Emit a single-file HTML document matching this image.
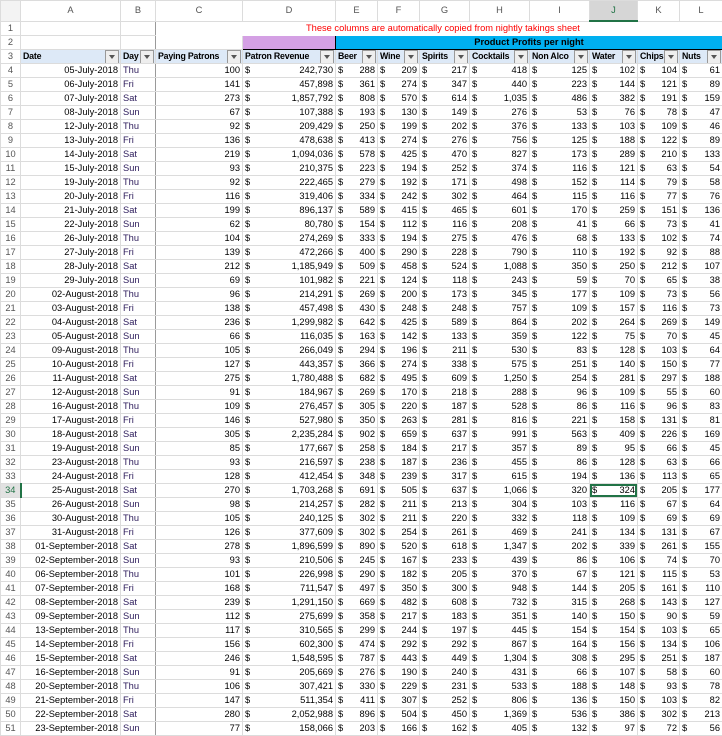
<!DOCTYPE html><html><head><style>
body{margin:0;width:722px;height:736px;overflow:hidden;background:#fff;font-family:"Liberation Sans",sans-serif;font-size:9.3px;color:#000}
table{border-collapse:collapse;table-layout:fixed;width:722px}
td,th{border:1px solid #dcdcdc;padding:0 2px;height:13px;line-height:13px;white-space:nowrap;overflow:hidden}
th{font-weight:normal;color:#555;background:#fff;text-align:center}
thead th{height:19px;line-height:19px}
tbody th{text-align:center}
td{text-align:right}
td.d{text-align:left;color:#2b1a5a;border-right:1px solid #9a9a9a}
td.m{text-align:left}
td.m i{float:right;font-style:normal}
tr.h td{background:#dde9f7;font-weight:bold;text-align:left;position:relative;font-size:8.8px;letter-spacing:-0.2px}
tr.h td span{position:absolute;right:1px;top:0px;width:12px;height:12px;border:1px solid #999;background:#eee;z-index:2}
tr.h td span:after{content:"";position:absolute;left:3px;top:4px;border-left:3px solid transparent;border-right:3px solid transparent;border-top:4px solid #555}
.sel{box-shadow:inset 0 0 0 2px #217346;position:relative}
</style></head><body>
<table>
<colgroup><col style="width:20px"><col style="width:100px"><col style="width:35px"><col style="width:87px"><col style="width:93px"><col style="width:42px"><col style="width:42px"><col style="width:50px"><col style="width:60px"><col style="width:60px"><col style="width:48px"><col style="width:42px"><col style="width:43px"></colgroup>
<thead><tr><th style="background:#f3f3f3"></th><th>A</th><th>B</th><th>C</th><th>D</th><th>E</th><th>F</th><th>G</th><th>H</th><th>I</th><th style="background:#d6d6d6;color:#217346;border-bottom:2px solid #217346">J</th><th>K</th><th>L</th></tr></thead>
<tbody>
<tr><th>1</th><td></td><td class=d></td><td colspan=10 style="text-align:left;color:#f00;padding-left:150px;border-color:#fff">These columns are automatically copied from nightly takings sheet</td></tr>
<tr><th>2</th><td></td><td class=d></td><td></td><td style="background:#d4a0e4;border:1px solid #000"></td><td colspan=8 style="background:#00b0f0;border:1px solid #000;text-align:center;font-weight:bold">Product Profits per night</td></tr>
<tr class=h><th style="background:#fff;font-weight:normal">3</th><td>Date<span></span></td><td>Day<span></span></td><td>Paying Patrons<span></span></td><td>Patron Revenue<span></span></td><td>Beer<span></span></td><td>Wine<span></span></td><td>Spirits<span></span></td><td>Cocktails<span></span></td><td>Non Alco<span></span></td><td>Water<span></span></td><td>Chips<span></span></td><td>Nuts<span></span></td></tr>
<tr><th>4</th><td>05-July-2018</td><td class=d>Thu</td><td>100</td><td class=m>$<i>242,730</i></td><td class=m>$<i>288</i></td><td class=m>$<i>209</i></td><td class=m>$<i>217</i></td><td class=m>$<i>418</i></td><td class=m>$<i>125</i></td><td class=m>$<i>102</i></td><td class=m>$<i>104</i></td><td class=m>$<i>61</i></td></tr>
<tr><th>5</th><td>06-July-2018</td><td class=d>Fri</td><td>141</td><td class=m>$<i>457,898</i></td><td class=m>$<i>361</i></td><td class=m>$<i>274</i></td><td class=m>$<i>347</i></td><td class=m>$<i>440</i></td><td class=m>$<i>223</i></td><td class=m>$<i>144</i></td><td class=m>$<i>121</i></td><td class=m>$<i>89</i></td></tr>
<tr><th>6</th><td>07-July-2018</td><td class=d>Sat</td><td>273</td><td class=m>$<i>1,857,792</i></td><td class=m>$<i>808</i></td><td class=m>$<i>570</i></td><td class=m>$<i>614</i></td><td class=m>$<i>1,035</i></td><td class=m>$<i>486</i></td><td class=m>$<i>382</i></td><td class=m>$<i>191</i></td><td class=m>$<i>159</i></td></tr>
<tr><th>7</th><td>08-July-2018</td><td class=d>Sun</td><td>67</td><td class=m>$<i>107,388</i></td><td class=m>$<i>193</i></td><td class=m>$<i>130</i></td><td class=m>$<i>149</i></td><td class=m>$<i>276</i></td><td class=m>$<i>53</i></td><td class=m>$<i>76</i></td><td class=m>$<i>78</i></td><td class=m>$<i>47</i></td></tr>
<tr><th>8</th><td>12-July-2018</td><td class=d>Thu</td><td>92</td><td class=m>$<i>209,429</i></td><td class=m>$<i>250</i></td><td class=m>$<i>199</i></td><td class=m>$<i>202</i></td><td class=m>$<i>376</i></td><td class=m>$<i>133</i></td><td class=m>$<i>103</i></td><td class=m>$<i>109</i></td><td class=m>$<i>46</i></td></tr>
<tr><th>9</th><td>13-July-2018</td><td class=d>Fri</td><td>136</td><td class=m>$<i>478,638</i></td><td class=m>$<i>413</i></td><td class=m>$<i>274</i></td><td class=m>$<i>276</i></td><td class=m>$<i>756</i></td><td class=m>$<i>125</i></td><td class=m>$<i>188</i></td><td class=m>$<i>122</i></td><td class=m>$<i>89</i></td></tr>
<tr><th>10</th><td>14-July-2018</td><td class=d>Sat</td><td>219</td><td class=m>$<i>1,094,036</i></td><td class=m>$<i>578</i></td><td class=m>$<i>425</i></td><td class=m>$<i>470</i></td><td class=m>$<i>827</i></td><td class=m>$<i>173</i></td><td class=m>$<i>289</i></td><td class=m>$<i>210</i></td><td class=m>$<i>133</i></td></tr>
<tr><th>11</th><td>15-July-2018</td><td class=d>Sun</td><td>93</td><td class=m>$<i>210,375</i></td><td class=m>$<i>223</i></td><td class=m>$<i>194</i></td><td class=m>$<i>252</i></td><td class=m>$<i>374</i></td><td class=m>$<i>116</i></td><td class=m>$<i>121</i></td><td class=m>$<i>63</i></td><td class=m>$<i>54</i></td></tr>
<tr><th>12</th><td>19-July-2018</td><td class=d>Thu</td><td>92</td><td class=m>$<i>222,465</i></td><td class=m>$<i>279</i></td><td class=m>$<i>192</i></td><td class=m>$<i>171</i></td><td class=m>$<i>498</i></td><td class=m>$<i>152</i></td><td class=m>$<i>114</i></td><td class=m>$<i>79</i></td><td class=m>$<i>58</i></td></tr>
<tr><th>13</th><td>20-July-2018</td><td class=d>Fri</td><td>116</td><td class=m>$<i>319,406</i></td><td class=m>$<i>334</i></td><td class=m>$<i>242</i></td><td class=m>$<i>302</i></td><td class=m>$<i>464</i></td><td class=m>$<i>115</i></td><td class=m>$<i>116</i></td><td class=m>$<i>77</i></td><td class=m>$<i>76</i></td></tr>
<tr><th>14</th><td>21-July-2018</td><td class=d>Sat</td><td>199</td><td class=m>$<i>896,137</i></td><td class=m>$<i>589</i></td><td class=m>$<i>415</i></td><td class=m>$<i>465</i></td><td class=m>$<i>601</i></td><td class=m>$<i>170</i></td><td class=m>$<i>259</i></td><td class=m>$<i>151</i></td><td class=m>$<i>136</i></td></tr>
<tr><th>15</th><td>22-July-2018</td><td class=d>Sun</td><td>62</td><td class=m>$<i>80,780</i></td><td class=m>$<i>154</i></td><td class=m>$<i>112</i></td><td class=m>$<i>116</i></td><td class=m>$<i>208</i></td><td class=m>$<i>41</i></td><td class=m>$<i>66</i></td><td class=m>$<i>73</i></td><td class=m>$<i>41</i></td></tr>
<tr><th>16</th><td>26-July-2018</td><td class=d>Thu</td><td>104</td><td class=m>$<i>274,269</i></td><td class=m>$<i>333</i></td><td class=m>$<i>194</i></td><td class=m>$<i>275</i></td><td class=m>$<i>476</i></td><td class=m>$<i>68</i></td><td class=m>$<i>133</i></td><td class=m>$<i>102</i></td><td class=m>$<i>74</i></td></tr>
<tr><th>17</th><td>27-July-2018</td><td class=d>Fri</td><td>139</td><td class=m>$<i>472,266</i></td><td class=m>$<i>400</i></td><td class=m>$<i>290</i></td><td class=m>$<i>228</i></td><td class=m>$<i>790</i></td><td class=m>$<i>110</i></td><td class=m>$<i>192</i></td><td class=m>$<i>92</i></td><td class=m>$<i>88</i></td></tr>
<tr><th>18</th><td>28-July-2018</td><td class=d>Sat</td><td>212</td><td class=m>$<i>1,185,949</i></td><td class=m>$<i>509</i></td><td class=m>$<i>458</i></td><td class=m>$<i>524</i></td><td class=m>$<i>1,088</i></td><td class=m>$<i>350</i></td><td class=m>$<i>250</i></td><td class=m>$<i>212</i></td><td class=m>$<i>107</i></td></tr>
<tr><th>19</th><td>29-July-2018</td><td class=d>Sun</td><td>69</td><td class=m>$<i>101,982</i></td><td class=m>$<i>221</i></td><td class=m>$<i>124</i></td><td class=m>$<i>118</i></td><td class=m>$<i>243</i></td><td class=m>$<i>59</i></td><td class=m>$<i>70</i></td><td class=m>$<i>65</i></td><td class=m>$<i>38</i></td></tr>
<tr><th>20</th><td>02-August-2018</td><td class=d>Thu</td><td>96</td><td class=m>$<i>214,291</i></td><td class=m>$<i>269</i></td><td class=m>$<i>200</i></td><td class=m>$<i>173</i></td><td class=m>$<i>345</i></td><td class=m>$<i>177</i></td><td class=m>$<i>109</i></td><td class=m>$<i>73</i></td><td class=m>$<i>56</i></td></tr>
<tr><th>21</th><td>03-August-2018</td><td class=d>Fri</td><td>138</td><td class=m>$<i>457,498</i></td><td class=m>$<i>430</i></td><td class=m>$<i>248</i></td><td class=m>$<i>248</i></td><td class=m>$<i>757</i></td><td class=m>$<i>109</i></td><td class=m>$<i>157</i></td><td class=m>$<i>116</i></td><td class=m>$<i>73</i></td></tr>
<tr><th>22</th><td>04-August-2018</td><td class=d>Sat</td><td>236</td><td class=m>$<i>1,299,982</i></td><td class=m>$<i>642</i></td><td class=m>$<i>425</i></td><td class=m>$<i>589</i></td><td class=m>$<i>864</i></td><td class=m>$<i>202</i></td><td class=m>$<i>264</i></td><td class=m>$<i>269</i></td><td class=m>$<i>149</i></td></tr>
<tr><th>23</th><td>05-August-2018</td><td class=d>Sun</td><td>66</td><td class=m>$<i>116,035</i></td><td class=m>$<i>163</i></td><td class=m>$<i>142</i></td><td class=m>$<i>133</i></td><td class=m>$<i>359</i></td><td class=m>$<i>122</i></td><td class=m>$<i>75</i></td><td class=m>$<i>70</i></td><td class=m>$<i>45</i></td></tr>
<tr><th>24</th><td>09-August-2018</td><td class=d>Thu</td><td>105</td><td class=m>$<i>266,049</i></td><td class=m>$<i>294</i></td><td class=m>$<i>196</i></td><td class=m>$<i>211</i></td><td class=m>$<i>530</i></td><td class=m>$<i>83</i></td><td class=m>$<i>128</i></td><td class=m>$<i>103</i></td><td class=m>$<i>64</i></td></tr>
<tr><th>25</th><td>10-August-2018</td><td class=d>Fri</td><td>127</td><td class=m>$<i>443,357</i></td><td class=m>$<i>366</i></td><td class=m>$<i>274</i></td><td class=m>$<i>338</i></td><td class=m>$<i>575</i></td><td class=m>$<i>251</i></td><td class=m>$<i>140</i></td><td class=m>$<i>150</i></td><td class=m>$<i>77</i></td></tr>
<tr><th>26</th><td>11-August-2018</td><td class=d>Sat</td><td>275</td><td class=m>$<i>1,780,488</i></td><td class=m>$<i>682</i></td><td class=m>$<i>495</i></td><td class=m>$<i>609</i></td><td class=m>$<i>1,250</i></td><td class=m>$<i>254</i></td><td class=m>$<i>281</i></td><td class=m>$<i>297</i></td><td class=m>$<i>188</i></td></tr>
<tr><th>27</th><td>12-August-2018</td><td class=d>Sun</td><td>91</td><td class=m>$<i>184,967</i></td><td class=m>$<i>269</i></td><td class=m>$<i>170</i></td><td class=m>$<i>218</i></td><td class=m>$<i>288</i></td><td class=m>$<i>96</i></td><td class=m>$<i>109</i></td><td class=m>$<i>55</i></td><td class=m>$<i>60</i></td></tr>
<tr><th>28</th><td>16-August-2018</td><td class=d>Thu</td><td>109</td><td class=m>$<i>276,457</i></td><td class=m>$<i>305</i></td><td class=m>$<i>220</i></td><td class=m>$<i>187</i></td><td class=m>$<i>528</i></td><td class=m>$<i>86</i></td><td class=m>$<i>116</i></td><td class=m>$<i>96</i></td><td class=m>$<i>83</i></td></tr>
<tr><th>29</th><td>17-August-2018</td><td class=d>Fri</td><td>146</td><td class=m>$<i>527,980</i></td><td class=m>$<i>350</i></td><td class=m>$<i>263</i></td><td class=m>$<i>281</i></td><td class=m>$<i>816</i></td><td class=m>$<i>221</i></td><td class=m>$<i>158</i></td><td class=m>$<i>131</i></td><td class=m>$<i>81</i></td></tr>
<tr><th>30</th><td>18-August-2018</td><td class=d>Sat</td><td>305</td><td class=m>$<i>2,235,284</i></td><td class=m>$<i>902</i></td><td class=m>$<i>659</i></td><td class=m>$<i>637</i></td><td class=m>$<i>991</i></td><td class=m>$<i>563</i></td><td class=m>$<i>409</i></td><td class=m>$<i>226</i></td><td class=m>$<i>169</i></td></tr>
<tr><th>31</th><td>19-August-2018</td><td class=d>Sun</td><td>85</td><td class=m>$<i>177,667</i></td><td class=m>$<i>258</i></td><td class=m>$<i>184</i></td><td class=m>$<i>217</i></td><td class=m>$<i>357</i></td><td class=m>$<i>89</i></td><td class=m>$<i>95</i></td><td class=m>$<i>66</i></td><td class=m>$<i>45</i></td></tr>
<tr><th>32</th><td>23-August-2018</td><td class=d>Thu</td><td>93</td><td class=m>$<i>216,597</i></td><td class=m>$<i>238</i></td><td class=m>$<i>187</i></td><td class=m>$<i>236</i></td><td class=m>$<i>455</i></td><td class=m>$<i>86</i></td><td class=m>$<i>128</i></td><td class=m>$<i>63</i></td><td class=m>$<i>66</i></td></tr>
<tr><th>33</th><td>24-August-2018</td><td class=d>Fri</td><td>128</td><td class=m>$<i>412,454</i></td><td class=m>$<i>348</i></td><td class=m>$<i>239</i></td><td class=m>$<i>317</i></td><td class=m>$<i>615</i></td><td class=m>$<i>194</i></td><td class=m>$<i>136</i></td><td class=m>$<i>113</i></td><td class=m>$<i>65</i></td></tr>
<tr><th style="color:#217346;background:#e2e2e2;border-right:2px solid #217346">34</th><td>25-August-2018</td><td class=d>Sat</td><td>270</td><td class=m>$<i>1,703,268</i></td><td class=m>$<i>691</i></td><td class=m>$<i>505</i></td><td class=m>$<i>637</i></td><td class=m>$<i>1,066</i></td><td class=m>$<i>320</i></td><td class="m sel">$<i>324</i></td><td class=m>$<i>205</i></td><td class=m>$<i>177</i></td></tr>
<tr><th>35</th><td>26-August-2018</td><td class=d>Sun</td><td>98</td><td class=m>$<i>214,257</i></td><td class=m>$<i>282</i></td><td class=m>$<i>211</i></td><td class=m>$<i>213</i></td><td class=m>$<i>304</i></td><td class=m>$<i>103</i></td><td class=m>$<i>116</i></td><td class=m>$<i>67</i></td><td class=m>$<i>64</i></td></tr>
<tr><th>36</th><td>30-August-2018</td><td class=d>Thu</td><td>105</td><td class=m>$<i>240,125</i></td><td class=m>$<i>302</i></td><td class=m>$<i>211</i></td><td class=m>$<i>220</i></td><td class=m>$<i>332</i></td><td class=m>$<i>118</i></td><td class=m>$<i>109</i></td><td class=m>$<i>69</i></td><td class=m>$<i>69</i></td></tr>
<tr><th>37</th><td>31-August-2018</td><td class=d>Fri</td><td>126</td><td class=m>$<i>377,609</i></td><td class=m>$<i>302</i></td><td class=m>$<i>254</i></td><td class=m>$<i>261</i></td><td class=m>$<i>469</i></td><td class=m>$<i>241</i></td><td class=m>$<i>134</i></td><td class=m>$<i>131</i></td><td class=m>$<i>67</i></td></tr>
<tr><th>38</th><td>01-September-2018</td><td class=d>Sat</td><td>278</td><td class=m>$<i>1,896,599</i></td><td class=m>$<i>890</i></td><td class=m>$<i>520</i></td><td class=m>$<i>618</i></td><td class=m>$<i>1,347</i></td><td class=m>$<i>202</i></td><td class=m>$<i>339</i></td><td class=m>$<i>261</i></td><td class=m>$<i>155</i></td></tr>
<tr><th>39</th><td>02-September-2018</td><td class=d>Sun</td><td>93</td><td class=m>$<i>210,506</i></td><td class=m>$<i>245</i></td><td class=m>$<i>167</i></td><td class=m>$<i>233</i></td><td class=m>$<i>439</i></td><td class=m>$<i>86</i></td><td class=m>$<i>106</i></td><td class=m>$<i>74</i></td><td class=m>$<i>70</i></td></tr>
<tr><th>40</th><td>06-September-2018</td><td class=d>Thu</td><td>101</td><td class=m>$<i>226,998</i></td><td class=m>$<i>290</i></td><td class=m>$<i>182</i></td><td class=m>$<i>205</i></td><td class=m>$<i>370</i></td><td class=m>$<i>67</i></td><td class=m>$<i>121</i></td><td class=m>$<i>115</i></td><td class=m>$<i>53</i></td></tr>
<tr><th>41</th><td>07-September-2018</td><td class=d>Fri</td><td>168</td><td class=m>$<i>711,547</i></td><td class=m>$<i>497</i></td><td class=m>$<i>350</i></td><td class=m>$<i>300</i></td><td class=m>$<i>948</i></td><td class=m>$<i>144</i></td><td class=m>$<i>205</i></td><td class=m>$<i>161</i></td><td class=m>$<i>110</i></td></tr>
<tr><th>42</th><td>08-September-2018</td><td class=d>Sat</td><td>239</td><td class=m>$<i>1,291,150</i></td><td class=m>$<i>669</i></td><td class=m>$<i>482</i></td><td class=m>$<i>608</i></td><td class=m>$<i>732</i></td><td class=m>$<i>315</i></td><td class=m>$<i>268</i></td><td class=m>$<i>143</i></td><td class=m>$<i>127</i></td></tr>
<tr><th>43</th><td>09-September-2018</td><td class=d>Sun</td><td>112</td><td class=m>$<i>275,699</i></td><td class=m>$<i>358</i></td><td class=m>$<i>217</i></td><td class=m>$<i>183</i></td><td class=m>$<i>351</i></td><td class=m>$<i>140</i></td><td class=m>$<i>150</i></td><td class=m>$<i>90</i></td><td class=m>$<i>59</i></td></tr>
<tr><th>44</th><td>13-September-2018</td><td class=d>Thu</td><td>117</td><td class=m>$<i>310,565</i></td><td class=m>$<i>299</i></td><td class=m>$<i>244</i></td><td class=m>$<i>197</i></td><td class=m>$<i>445</i></td><td class=m>$<i>154</i></td><td class=m>$<i>154</i></td><td class=m>$<i>103</i></td><td class=m>$<i>65</i></td></tr>
<tr><th>45</th><td>14-September-2018</td><td class=d>Fri</td><td>156</td><td class=m>$<i>602,300</i></td><td class=m>$<i>474</i></td><td class=m>$<i>292</i></td><td class=m>$<i>292</i></td><td class=m>$<i>867</i></td><td class=m>$<i>164</i></td><td class=m>$<i>156</i></td><td class=m>$<i>134</i></td><td class=m>$<i>106</i></td></tr>
<tr><th>46</th><td>15-September-2018</td><td class=d>Sat</td><td>246</td><td class=m>$<i>1,548,595</i></td><td class=m>$<i>787</i></td><td class=m>$<i>443</i></td><td class=m>$<i>449</i></td><td class=m>$<i>1,304</i></td><td class=m>$<i>308</i></td><td class=m>$<i>295</i></td><td class=m>$<i>251</i></td><td class=m>$<i>187</i></td></tr>
<tr><th>47</th><td>16-September-2018</td><td class=d>Sun</td><td>91</td><td class=m>$<i>205,669</i></td><td class=m>$<i>276</i></td><td class=m>$<i>190</i></td><td class=m>$<i>240</i></td><td class=m>$<i>431</i></td><td class=m>$<i>66</i></td><td class=m>$<i>107</i></td><td class=m>$<i>58</i></td><td class=m>$<i>60</i></td></tr>
<tr><th>48</th><td>20-September-2018</td><td class=d>Thu</td><td>106</td><td class=m>$<i>307,421</i></td><td class=m>$<i>330</i></td><td class=m>$<i>229</i></td><td class=m>$<i>231</i></td><td class=m>$<i>533</i></td><td class=m>$<i>188</i></td><td class=m>$<i>148</i></td><td class=m>$<i>93</i></td><td class=m>$<i>78</i></td></tr>
<tr><th>49</th><td>21-September-2018</td><td class=d>Fri</td><td>147</td><td class=m>$<i>511,354</i></td><td class=m>$<i>411</i></td><td class=m>$<i>307</i></td><td class=m>$<i>252</i></td><td class=m>$<i>806</i></td><td class=m>$<i>136</i></td><td class=m>$<i>150</i></td><td class=m>$<i>103</i></td><td class=m>$<i>82</i></td></tr>
<tr><th>50</th><td>22-September-2018</td><td class=d>Sat</td><td>280</td><td class=m>$<i>2,052,988</i></td><td class=m>$<i>896</i></td><td class=m>$<i>504</i></td><td class=m>$<i>450</i></td><td class=m>$<i>1,369</i></td><td class=m>$<i>536</i></td><td class=m>$<i>386</i></td><td class=m>$<i>302</i></td><td class=m>$<i>213</i></td></tr>
<tr><th>51</th><td>23-September-2018</td><td class=d>Sun</td><td>77</td><td class=m>$<i>158,066</i></td><td class=m>$<i>203</i></td><td class=m>$<i>166</i></td><td class=m>$<i>162</i></td><td class=m>$<i>405</i></td><td class=m>$<i>132</i></td><td class=m>$<i>97</i></td><td class=m>$<i>72</i></td><td class=m>$<i>56</i></td></tr>
</tbody></table>
</body></html>
